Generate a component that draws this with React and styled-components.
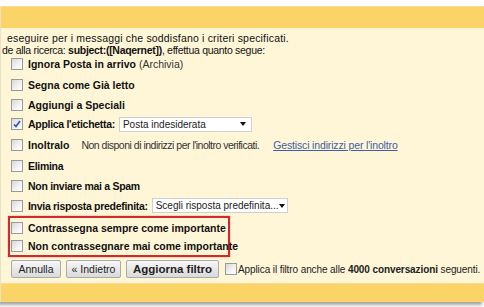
import React from 'react';
import styled, { createGlobalStyle } from 'styled-components';

const Global = createGlobalStyle`
  html, body {
    margin: 0;
    padding: 0;
    background: #fff;
  }
  body {
    font-family: "Liberation Sans", Arial, sans-serif;
    font-size: 10.5px;
    color: #111;
  }
`;

const Page = styled.div`
  width: 484px;
  height: 307px;
  overflow: hidden;
  padding-top: 6px;
  box-sizing: border-box;
  display: flex;
  flex-direction: column;
`;

const Panel = styled.div`
  flex: 1;
  display: flex;
  flex-direction: column;
  border-left: 1px solid #e9e2c8;
  box-shadow: -2px 3px 3px rgba(0, 0, 0, 0.35);
  margin-bottom: 5px;
`;

const Bar = styled.div`
  height: ${p => p.h}px;
  flex: none;
  background: #fad466;
  border-top: 1px solid #f8dc8c;
`;

const Body = styled.div`
  flex: 1;
  background: #fff6d8;
  padding: 4px 0 0 0;
`;

const Intro = styled.p`
  margin: 0;
  line-height: 12px;
  white-space: nowrap;
  padding-left: ${p => p.indent || 0}px;
  letter-spacing: ${p => p.track || 0}px;
  b { font-weight: bold; }
`;

const Options = styled.div`
  display: flex;
  flex-direction: column;
  padding: 0 0 0 10px;
  margin-top: -2px;
`;

const Row = styled.div`
  display: flex;
  align-items: center;
  height: ${p => p.h || 20}px;
  white-space: nowrap;
`;

const Box = styled.span`
  position: relative;
  width: 10px;
  height: 10px;
  flex: none;
  border: 1px solid #9a9a9a;
  background: linear-gradient(135deg, #d8d8d8 0%, #f4f4f4 60%, #fff 100%);
  margin-right: ${p => p.gap}px;
  display: inline-block;
`;

const Tick = styled.svg`
  position: absolute;
  left: 1px;
  top: 1px;
`;

const Label = styled.span`
  font-weight: bold;
  font-size: 10.5px;
  color: #111;
  letter-spacing: ${p => (p.tight ? '-0.3px' : '0')};
`;

const Note = styled.span`
  color: #333;
  margin-left: ${p => p.gap || 4}px;
  letter-spacing: ${p => p.track || 0}px;
`;

const Select = styled.span`
  display: inline-flex;
  align-items: center;
  justify-content: space-between;
  box-sizing: border-box;
  flex: none;
  width: ${p => p.w}px;
  height: 15px;
  margin-left: 4px;
  padding: 0 5px 0 3px;
  background: #fff;
  border: 1px solid #cfcfcf;
  color: #222;
  font-size: 10px;
`;

const Caret = styled.span`
  width: 0;
  height: 0;
  border-left: 3px solid transparent;
  border-right: 3px solid transparent;
  border-top: 4px solid #111;
`;

const Link = styled.a`
  color: #3d5fa8;
  text-decoration: underline;
  margin-left: 14px;
  letter-spacing: -0.15px;
`;

const Highlight = styled.div`
  display: flex;
  flex-direction: column;
  margin: 1px 0 0 -3px;
  padding: 0 0 0 1px;
  width: 217px;
  border: 2px solid #d22a2a;
  box-shadow: 0 0 1px #d55;
`;

const Actions = styled.div`
  display: flex;
  align-items: center;
  gap: 5px;
  padding: 3px 0 0 10px;
  white-space: nowrap;
`;

const Button = styled.span`
  display: inline-flex;
  align-items: center;
  justify-content: center;
  box-sizing: border-box;
  flex: none;
  height: 18px;
  width: ${p => p.w}px;
  border: 1px solid #aaa;
  border-radius: 2px;
  background: linear-gradient(#f7f7f7, #dadada);
  color: #222;
  font-weight: ${p => (p.strong ? 'bold' : 'normal')};
  font-size: ${p => (p.strong ? '11.5px' : '10.5px')};
`;

const ApplyAll = styled.span`
  display: inline-flex;
  align-items: center;
  margin-left: 1px;
  color: #222;
  font-size: 10px;
  letter-spacing: -0.1px;
`;

const Check = ({ on, gap = 5 }) => (
  <Box gap={gap}>
    {on && (
      <Tick width="8" height="8" viewBox="0 0 8 8">
        <path d="M1 4.5 L3 6.5 L7 1" fill="none" stroke="#2b4fb5" strokeWidth="1.6" />
      </Tick>
    )}
  </Box>
);

const Option = ({ label, on, h, tight, children }) => (
  <Row h={h}>
    <Check on={on} />
    <Label tight={tight}>{label}</Label>
    {children}
  </Row>
);

export default function App() {
  return (
    <>
      <Global />
      <Page>
        <Panel>
          <Bar h={21} />
          <Body>
            <Intro indent={3} track={0.18}>
              &nbsp;eseguire per i messaggi che soddisfano i criteri specificati.
            </Intro>
            <Intro indent={1} track={-0.3}>
              de alla ricerca: <b>subject:([Naqernet])</b>, effettua quanto segue:
            </Intro>
            <Options>
              <Option label="Ignora Posta in arrivo" h={20}>
                <Note gap={3}>(Archivia)</Note>
              </Option>
              <Option label="Segna come Già letto" h={21} />
              <Option label="Aggiungi a Speciali" h={19} />
              <Option label="Applica l'etichetta:" on tight h={20}>
                <Select w={133}>
                  Posta indesiderata <Caret />
                </Select>
              </Option>
              <Option label="Inoltralo" h={21}>
                <Note gap={12} track={-0.5}>Non disponi di indirizzi per l'inoltro verificati.</Note>
                <Link>Gestisci indirizzi per l'inoltro</Link>
              </Option>
              <Option label="Elimina" tight h={21} />
              <Option label="Non inviare mai a Spam" tight />
              <Option label="Invia risposta predefinita:" tight h={19}>
                <Select w={136}>
                  Scegli risposta predefinita... <Caret />
                </Select>
              </Option>
              <Highlight>
                <Option label="Contrassegna sempre come importante" h={19} />
                <Option label="Non contrassegnare mai come importante" h={18} />
              </Highlight>
            </Options>
            <Actions>
              <Button w={50}>Annulla</Button>
              <Button w={55}>« Indietro</Button>
              <Button w={93} strong>Aggiorna filtro</Button>
              <ApplyAll>
                <Check gap={1} />
                Applica il filtro anche alle&nbsp;<b>4000 conversazioni</b>&nbsp;seguenti.
              </ApplyAll>
            </Actions>
          </Body>
          <Bar h={18} />
        </Panel>
      </Page>
    </>
  );
}
